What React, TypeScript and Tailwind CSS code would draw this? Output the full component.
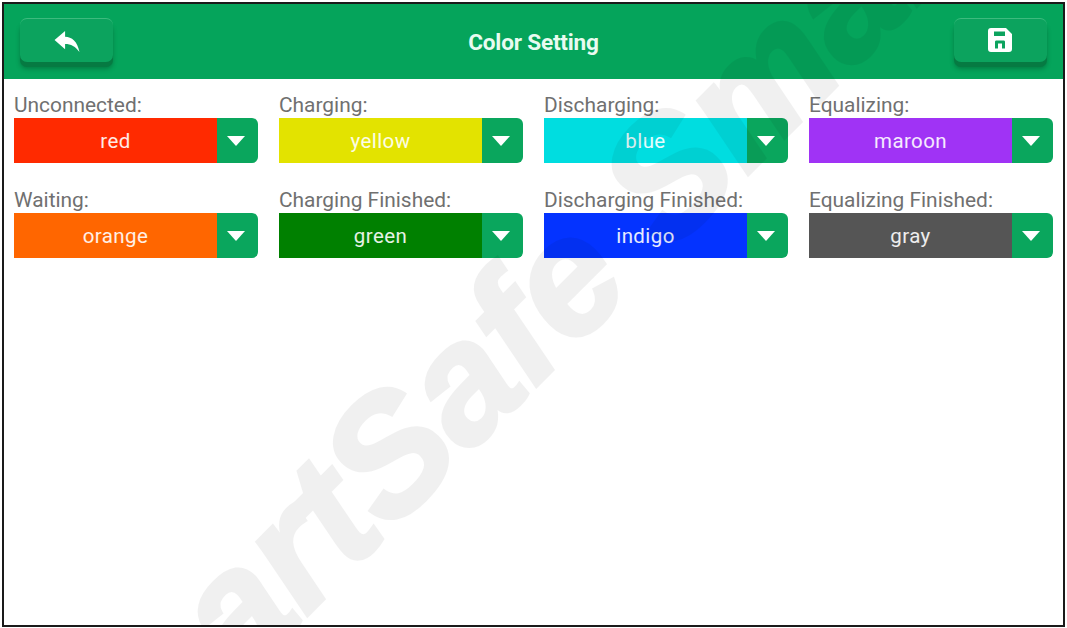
const settings = [
  { label: "Unconnected:", value: "red", color: "bg-[#ff2a00]" },
  { label: "Charging:", value: "yellow", color: "bg-[#e3e300]" },
  { label: "Discharging:", value: "blue", color: "bg-[#00dde0]" },
  { label: "Equalizing:", value: "maroon", color: "bg-[#a033f5]" },
  { label: "Waiting:", value: "orange", color: "bg-[#ff6600]" },
  { label: "Charging Finished:", value: "green", color: "bg-[#008000]" },
  { label: "Discharging Finished:", value: "indigo", color: "bg-[#0433ff]" },
  { label: "Equalizing Finished:", value: "gray", color: "bg-[#555555]" },
];

function BackIcon() {
  return (
    <svg width="28" height="23" viewBox="0 0 28 24" fill="#ffffff" className="mt-[2px]">
      <path d="M1 10.5 L12 1 V7 C19 7 25 12 27 23 C23 17 18 14.500 12 14.500 V20 Z" />
    </svg>
  );
}

function SaveIcon() {
  return (
    <svg width="26" height="26" viewBox="0 0 26 26">
      <path
        fill="#ffffff"
        fillRule="evenodd"
        d="M4 1 H19 L25 7 V22 C25 24 24 25 22 25 H4 C2 25 1 24 1 22 V4 C1 2 2 1 4 1 Z M7 4.500 V9 H18 V4.500 Z M8 21.500 V15 C8 14 8.500 13.500 9.500 13.500 H16.500 C17.500 13.500 18 14 18 15 V21.500 H15 V16.500 H11 V21.500 Z"
      />
    </svg>
  );
}

function HeaderButton({ children }: { children: React.ReactNode }) {
  return (
    <button className="mb-[4px] flex h-[44px] w-[93px] items-center justify-center rounded-[7px] border-t border-[#3dbb7e] bg-[#0ca35e] shadow-[0_5px_0_#067a42,0_7px_4px_rgba(0,70,35,0.4)]">
      {children}
    </button>
  );
}

function ColorSelect({ label, value, color }: { label: string; value: string; color: string }) {
  return (
    <div className="flex flex-col">
      <span className="h-[24px] text-[20.9px] leading-[22px] text-[#707070]">{label}</span>
      <div className="flex h-[45px] overflow-hidden rounded-r-[6px]">
        <div className={`flex w-[203px] items-center justify-center pt-[2px] text-[20.5px] tracking-[0.4px] text-white/90 ${color}`}>
          {value}
        </div>
        <div className="flex flex-1 items-center justify-center bg-[#0aa65d] pt-[1px] pr-[3px]">
          <div className="h-0 w-0 border-x-[9px] border-t-[10px] border-x-transparent border-t-white" />
        </div>
      </div>
    </div>
  );
}

export default function App() {
  return (
    <div className="h-[628px] w-[1067px] overflow-hidden bg-white pt-[2px] pl-[2px] font-['Roboto',sans-serif]">
      <div className="relative h-[625px] w-[1063px] overflow-hidden border-2 border-[#1a1a1a]">
        <header className="flex h-[75px] items-center justify-between bg-[#05a45b] px-[16px]">
          <HeaderButton>
            <BackIcon />
          </HeaderButton>
          <h1 className="mt-[3px] text-[22.6px] font-bold tracking-[-0.2px] text-[#e9fbf0]">Color Setting</h1>
          <HeaderButton>
            <SaveIcon />
          </HeaderButton>
        </header>

        <main className="grid grid-cols-[repeat(4,244px)] gap-x-[21px] gap-y-[26px] pt-[15px] pl-[10px]">
          {settings.map((item) => (
            <ColorSelect key={item.label} {...item} />
          ))}
        </main>

        {/* watermark sits over everything */}
        <div className="pointer-events-none absolute top-[737px] left-[15px] origin-left -rotate-45 whitespace-nowrap font-['Liberation_Sans',sans-serif] text-[165px] leading-none font-bold text-black italic opacity-[0.055] [-webkit-text-stroke:4px_#000]">
          SmartSafe Smart
        </div>
      </div>
    </div>
  );
}
